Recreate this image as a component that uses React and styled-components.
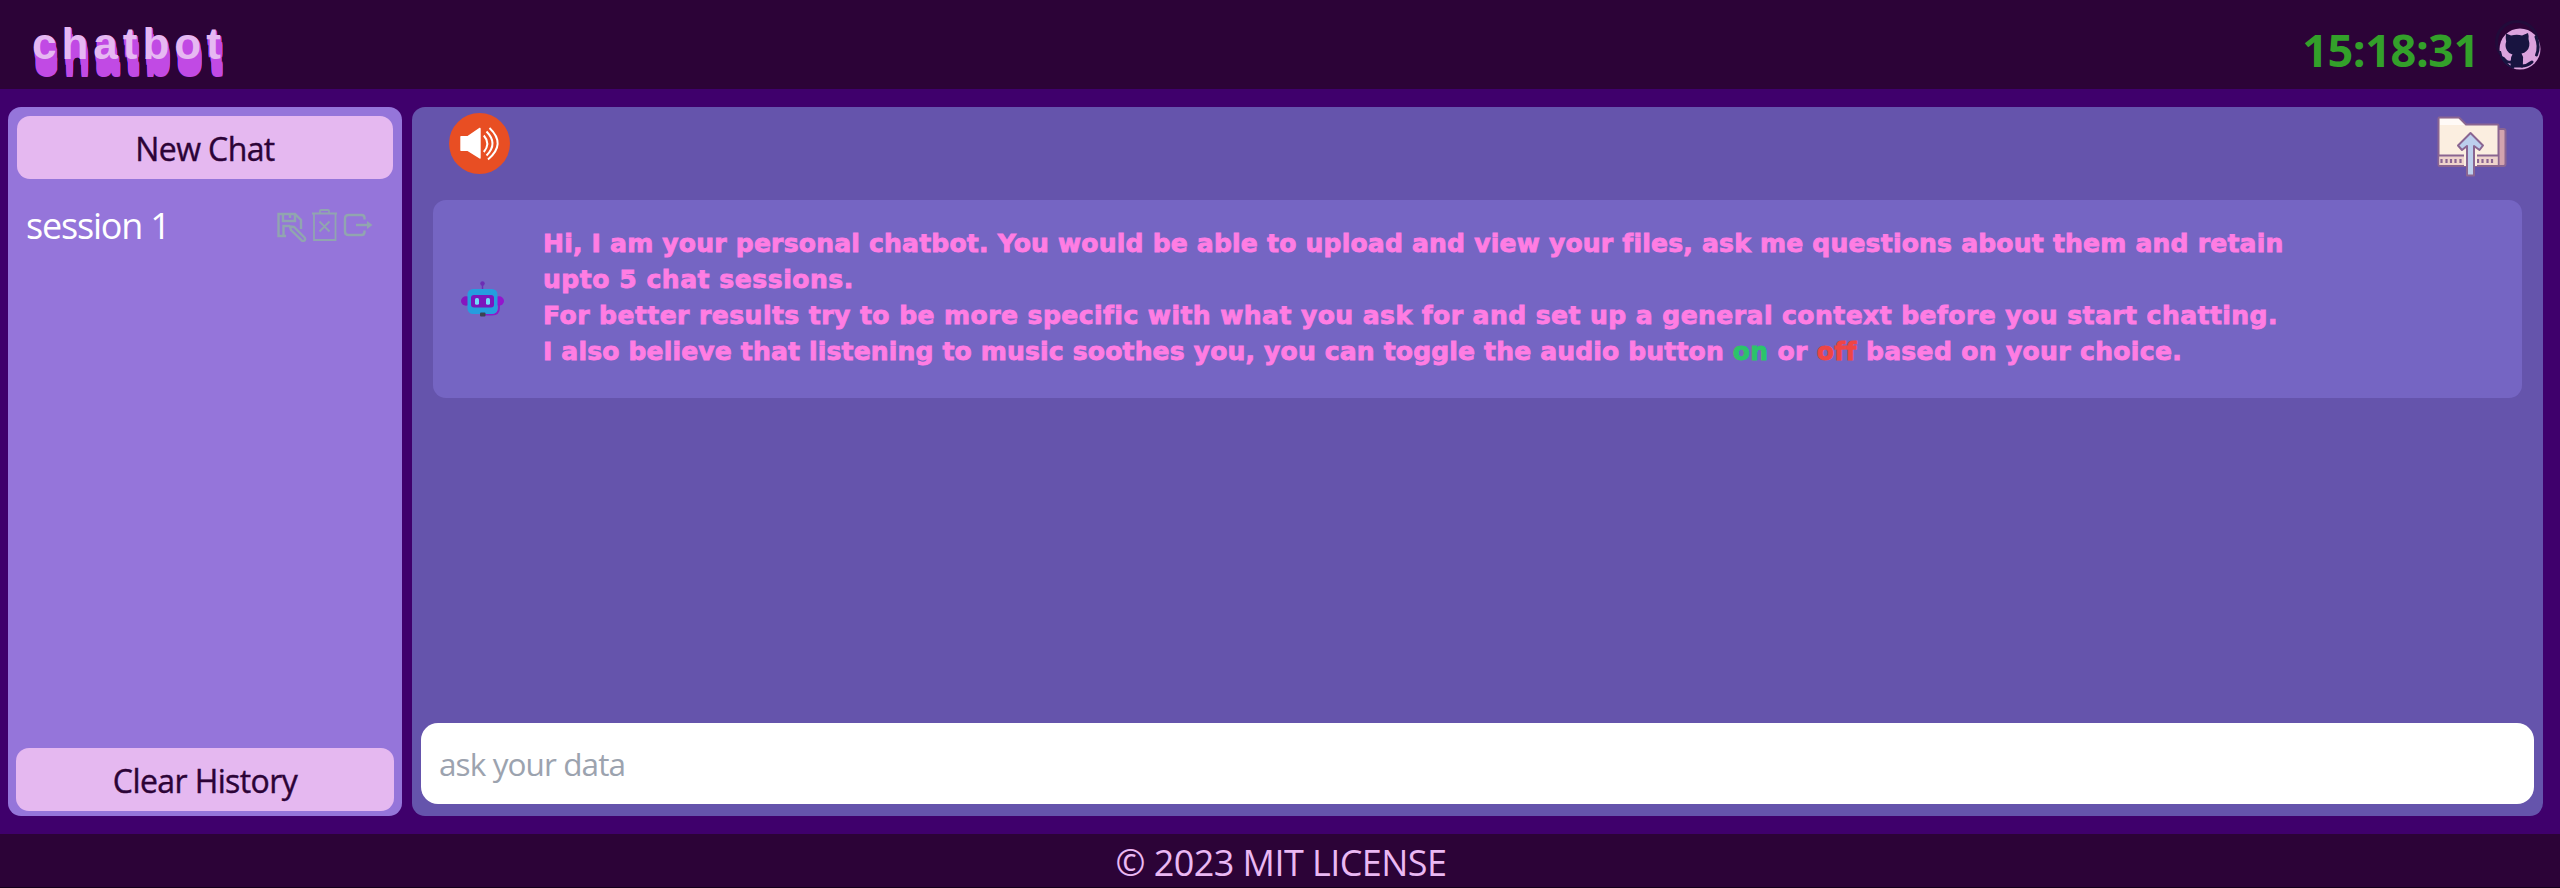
import React from 'react';
import styled, { createGlobalStyle } from 'styled-components';

const ui = '"Open Sans", "Noto Sans", sans-serif';

const GlobalStyle = createGlobalStyle`
  * { box-sizing: border-box; }
  body { margin: 0; background: #3f006c; font-family: ${ui}; }
`;

const Page = styled.div`
  display: flex;
  flex-direction: column;
  height: 100vh;
  min-height: 888px;
`;

const Header = styled.header`
  display: flex;
  justify-content: space-between;
  align-items: center;
  height: 89px;
  padding: 0 17px 0 32px;
  background: #2c0337;
`;

const Brand = styled.h1`
  margin: 0;
  padding-bottom: 2px;
  font: 700 44px/52px "Liberation Sans", Arial, sans-serif;
  letter-spacing: 5px;
  color: #e6b8f2;
  text-shadow: ${Array.from({ length: 18 }, (_, i) => `${i < 6 ? 1 : 2}px ${i + 1}px 0 #c14ae4`).join(', ')};
`;

const HeaderRight = styled.div`
  display: flex;
  align-items: center;
  gap: 16px;
`;

const Clock = styled.time`
  padding-top: 10px;
  font-size: 45px;
  line-height: 60px;
  font-weight: 700;
  letter-spacing: -0.4px;
  color: #33a02a;
`;

const Body = styled.div`
  flex: 1;
  display: flex;
  gap: 10px;
  padding: 18px 17px 18px 8px;
`;

const Sidebar = styled.aside`
  display: flex;
  flex-direction: column;
  width: 394px;
  padding: 9px 9px 5px;
  border-radius: 13px;
  background: #9575da;
`;

const PanelButton = styled.button`
  flex: none;
  height: 63px;
  margin: ${(p) => (p.$wide ? '0 -1px' : '0')};
  padding: 2px 0 0;
  border: 0;
  border-radius: 13px;
  background: #e5b8f0;
  color: #2c0337;
  font: 500 32px/40px ${ui};
  letter-spacing: ${(p) => (p.$wide ? '-0.6px' : '-0.6px')};
  -webkit-text-stroke: 0.4px #2c0337;
`;

const SessionList = styled.div`
  flex: 1;
  padding-top: 21px;
`;

const SessionRow = styled.div`
  display: flex;
  justify-content: space-between;
  align-items: center;
  height: 50px;
  padding: 0 20px 0 9px;
  color: #fff;
  font-size: 36px;
  letter-spacing: -1.2px;
`;

const SessionActions = styled.div`
  display: flex;
  gap: 5px;
`;

const Main = styled.main`
  flex: 1;
  display: flex;
  flex-direction: column;
  border-radius: 13px;
  background: #6554ac;
`;

const Tools = styled.div`
  display: flex;
  justify-content: space-between;
  height: 93px;
  padding: 6px 35px 0 37px;
`;

const Message = styled.section`
  display: flex;
  height: 198px;
  margin: 0 21px;
  padding: 26px 28px 0;
  border-radius: 13px;
  background: #7565c3;
`;

const Avatar = styled.div`
  width: 82px;
  padding-top: 55px;
`;

const MessageText = styled.div`
  font: 700 25px/36px "DejaVu Sans", sans-serif;
  color: #ff7de3;
  white-space: nowrap;
  -webkit-text-stroke: 0.9px currentColor;
`;

const Line = styled.div`
  letter-spacing: ${(p) => p.$track}px;
`;

const Tail = styled.span`
  letter-spacing: 0.35px;
`;

const State = styled.span`
  color: ${(p) => (p.$on ? '#2cc46a' : '#ef4545')};
`;

const Prompt = styled.input`
  height: 81px;
  margin: auto 9px 12px;
  padding: 0 18px;
  border: 0;
  border-radius: 17px;
  outline: 0;
  background: #fff;
  font: 400 31.500px/44px ${ui};
  letter-spacing: -0.9px;
  &::placeholder { color: #9ca3af; opacity: 1; }
`;

const Footer = styled.footer`
  height: 54px;
  padding: 2px 0 0 2px;
  border-bottom: 1px solid #12001a;
  background: #2c0337;
  color: #eab8f3;
  text-align: center;
  font-size: 36px;
  line-height: 54px;
  letter-spacing: -0.56px;
`;

const GithubIcon = () => (
  <svg width="48" height="52" viewBox="0 0 48 52">
    <circle cx="22" cy="23" r="20.5" fill="none" stroke="#210b3a" strokeWidth="3" />
    <circle cx="25" cy="30" r="20.5" fill="#dba3dd" />
    <path d="M11 14.500l5 2q6-1.500 11 0l6-2.500q1 3 .5 6q2.500 8-2 12q-2 2-5 2.500q2 3 1.500 6l-.2 8h-12l-.3-4q-5 .5-6.500-3q-1-2.500-3.500-4q3-1 6 3q2 2 4.300 1q.2-4.500 1.700-6q-4-1-5.500-4q-2.500-4-.8-9q-.8-4-.2-8z" fill="#181440" />
    <path d="M5 32a20 20 0 0 0 14 17" fill="none" stroke="#181440" strokeWidth="2" />
    <path d="M41 18q4 10 .5 18M37 43q-5 4-10 4" fill="none" stroke="#181440" strokeWidth="3" strokeLinecap="round" />
  </svg>
);

const SaveIcon = () => (
  <svg width="31" height="34" viewBox="0 0 31 34" fill="none" stroke="#91a5b0" strokeWidth="2.4">
    <path d="M10 28H2.500V6H19l6 6v9M7 6v7h12V6M14 6v4M7.500 28V18H14" />
    <path d="M14 18.500l4 .5 10.500 10.500q1.500 2-.3 3.200q-1.600.8-2.800-.5L15 22z" />
  </svg>
);

const TrashIcon = () => (
  <svg width="26" height="34" viewBox="0 0 26 34" fill="none" stroke="#91a5b0" strokeWidth="1.800">
    <path d="M0 5.500h25M2 6v26h21.500V6M8 5V3q0-1 1-1h7q1 0 1 1v2M7.500 13.500l10 10M17.500 13.500l-10 10" />
  </svg>
);

const ExportIcon = () => (
  <svg width="30" height="34" viewBox="0 0 30 34" fill="none" stroke="#91a5b0" strokeWidth="2.4">
    <path d="M21.500 11.500V10q0-3-3-3H5.500q-3.500 0-3.500 3.500v13Q2 27 5.500 27h13q3 0 3-3v-1.500M13 17h13" />
    <path d="M24 13l5.500 4-5.500 4z" fill="#91a5b0" stroke="none" />
  </svg>
);

const SoundIcon = () => (
  <svg width="61" height="61" viewBox="0 0 61 61">
    <circle cx="30.500" cy="30.500" r="30.500" fill="#e84e23" />
    <path d="M12 23h6.500l12-8.300q1.200-.3 1.200 1V45q0 1-1.200.6L18.500 38H12q-.7 0-.7-.7V23.700q0-.7.7-.7z" fill="#fff" />
    <path d="M34.800 22.500q7 8 0 16.500M37.500 18.500q12 12 0 24M40.500 15q17 16-1.500 31.500" fill="none" stroke="#fff" strokeWidth="2" />
  </svg>
);

const UploadIcon = () => (
  <svg width="72" height="66" viewBox="0 0 72 66" stroke="#8a6591" strokeWidth="2" strokeLinejoin="round">
    <path d="M62 16h5.500q2 0 2 2v33q0 2-2 2H62z" fill="#d3a3ae" />
    <path d="M3 4.500h20l7 7h31.500q1 0 1 1V52q0 1-1 1H4q-1.500 0-1.500-1.500V5.500z" fill="#fbeee0" />
    <path d="M4 6h18.500l6 6H4z" fill="#fffaf7" stroke="none" />
    <path d="M3.500 43h58v9h-58z" fill="#efd4cc" stroke="none" />
    <path d="M3 42.500h25M41 42.500h21" />
    <path d="M5.500 46v4M10.500 46v4M15 46v4M19.500 46v4M24.500 46v4M42 46v4M46.500 46v4M51.500 46v4M56 46v4" strokeWidth="2.200" />
    <path d="M28 35h13v18H28z" fill="#fbeee0" stroke="none" />
    <path d="M34.500 20L47 32.500 43.500 37l-5.500-4v29.500h-7V33l-5 4-4-4.500z" fill="#bccfed" />
  </svg>
);

const RobotIcon = () => (
  <svg width="43" height="36" viewBox="0 0 43 36">
    <circle cx="21.500" cy="2.500" r="2.200" fill="#6d2db4" />
    <path d="M21.500 3v6" stroke="#6d2db4" strokeWidth="1.500" />
    <ellipse cx="5" cy="20" rx="5" ry="4.700" fill="#8516be" />
    <ellipse cx="38" cy="20" rx="5" ry="4.700" fill="#9415cd" />
    <path d="M38 23v4q0 6.500-7 6.500h-7" fill="none" stroke="#8a1cc6" strokeWidth="1.800" />
    <rect x="6.500" y="8" width="30" height="25" rx="5.500" fill="#259ddf" />
    <rect x="10" y="14" width="23" height="12.500" rx="3" fill="#7b16bd" />
    <rect x="14" y="17" width="4" height="6.800" rx="1.600" fill="#70dcfb" />
    <rect x="25" y="17" width="4" height="6.800" rx="1.600" fill="#70dcfb" />
    <rect x="19" y="31.500" width="5.500" height="4" rx="1" fill="#3c4350" />
  </svg>
);

export default function App() {
  return (
    <Page>
      <GlobalStyle />
      <Header>
        <Brand>chatbot</Brand>
        <HeaderRight>
          <Clock>15:18:31</Clock>
          <GithubIcon />
        </HeaderRight>
      </Header>
      <Body>
        <Sidebar>
          <PanelButton>New Chat</PanelButton>
          <SessionList>
            <SessionRow>
              session 1
              <SessionActions>
                <SaveIcon />
                <TrashIcon />
                <ExportIcon />
              </SessionActions>
            </SessionRow>
          </SessionList>
          <PanelButton $wide>Clear History</PanelButton>
        </Sidebar>
        <Main>
          <Tools>
            <SoundIcon />
            <UploadIcon />
          </Tools>
          <Message>
            <Avatar>
              <RobotIcon />
            </Avatar>
            <MessageText>
              <Line $track={0.225}>
                Hi, I am your personal chatbot. You would be able to upload and view your files, ask me questions about them and retain
              </Line>
              <Line $track={0.55}>upto 5 chat sessions.</Line>
              <Line $track={0.46}>
                For better results try to be more specific with what you ask for and set up a general context before you start chatting.
              </Line>
              <Line $track={0.18}>
                I also believe that listening to music soothes you, you can toggle the audio button{' '}
                <Tail>
                  <State $on>on</State> or <State>off</State> based on your choice.
                </Tail>
              </Line>
            </MessageText>
          </Message>
          <Prompt placeholder="ask your data" />
        </Main>
      </Body>
      <Footer>© 2023 MIT LICENSE</Footer>
    </Page>
  );
}
